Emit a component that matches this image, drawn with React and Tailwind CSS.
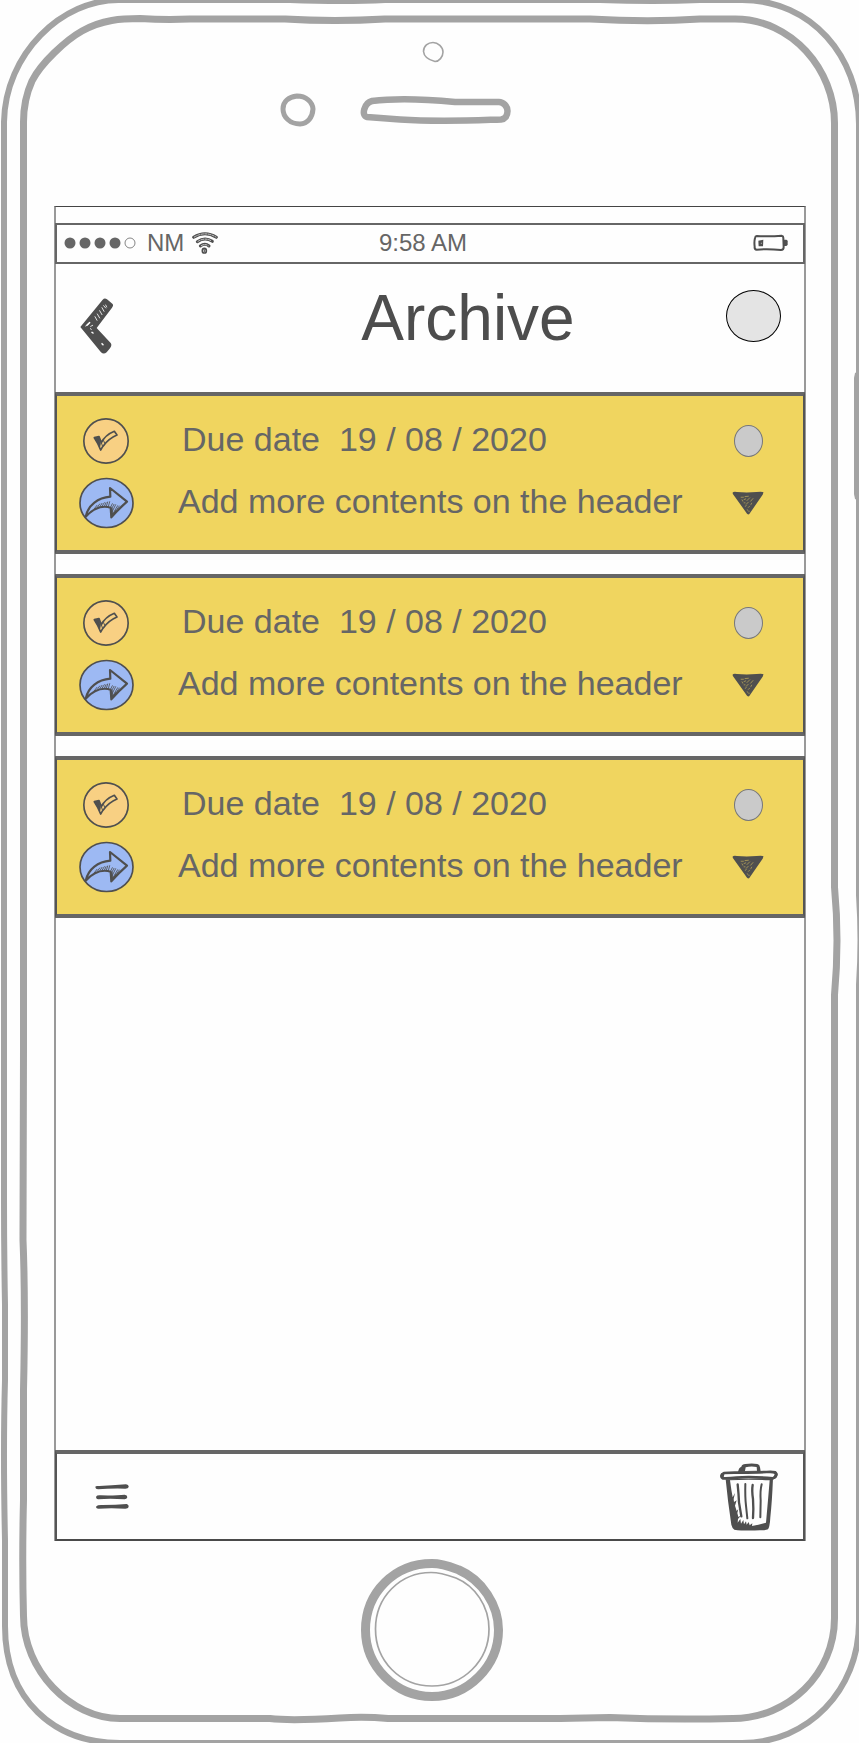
import React from "react";

const INK = "#4f4f4f";
const BEZEL = "#a3a3a3";

const tasks = [
  { id: 1, due: "19 / 08 / 2020", title: "Add more contents on the header" },
  { id: 2, due: "19 / 08 / 2020", title: "Add more contents on the header" },
  { id: 3, due: "19 / 08 / 2020", title: "Add more contents on the header" },
];

function PhoneFrame() {
  return (
    <svg
      aria-hidden="true"
      viewBox="0 0 859 1743"
      preserveAspectRatio="none"
      fill="none"
      stroke={BEZEL}
      className="pointer-events-none absolute inset-0 h-full w-full"
    >
      {/* outer edge */}
      <path
        strokeWidth="6"
        d="M120 0 H290 Q345 2 385 0 H600 Q655 2 700 0 H742 C812 0 859 57 859 124 V895 Q862 940 859 985 V1622 C859 1690 808 1743 742 1743 H120 C54 1743 5 1700 5 1626 V1540 Q3 1450 5 1380 V1305 Q4 1250 4 1200 V122 C5 54 62 -1 120 0 Z"
      />
      {/* inner edge */}
      <path
        strokeWidth="7"
        d="M140 18.500 Q165 20 190 19 H285 Q335 22 385 19 H590 Q650 22.500 700 19 H735 C792 19 834.500 70 834.500 123 V887 Q839.500 940 834.500 995 V1618 C834.500 1674 788 1718.500 733 1718.500 Q670 1720 610 1717.500 Q580 1718 560 1718.500 H388 Q365 1716.500 340 1718 Q290 1721 270 1718.500 H120 C70 1718.500 23.500 1670 23.500 1616 Q22 1560 23.500 1500 V1390 Q25.500 1300 23 1240 L23.500 1050 V122 C23.500 104 27 92 32 81 C41 63 66 40 82 31 C102 19.500 122 18.500 140 18.500 Z"
      />
      {/* camera, sensor, speaker */}
      <path
        strokeWidth="1.600"
        d="M433 42.500 C438 42.500 443 47 443 52 C443 57 439 61.500 435 61.500 C429 60 424 57 423.500 51.500 C423.500 46 428 42.500 433 42.500 Z"
      />
      <path
        strokeWidth="5"
        d="M297 96 C306 96 312.500 102 313 109 C312.500 117 308 123.500 300 124 C290 124 283 117 283 109 C283 101 289 97 297 96 Z"
      />
      <path
        strokeWidth="6.500"
        d="M372 101 C395 98 425 99 455 102 H499 C503 102 507.500 106 507.500 111 C507.500 116 505 119 501 119.500 C470 120.500 440 122 400 119.500 L367 117 C361 116 364 103 372 101 Z"
      />
      {/* side button */}
      <path fill={BEZEL} stroke="none" d="M859 371 L855 373 L854 378 V494 L855 499 L859 501 Z" />
    </svg>
  );
}

function SignalDots() {
  return (
    <svg width="72" height="12" viewBox="0 0 72 12" role="img" aria-label="Signal strength">
      {[6, 21, 36, 51].map((cx) => (
        <circle key={cx} cx={cx} cy="6" r="5.500" fill="#666" />
      ))}
      <circle cx="66" cy="6" r="5" fill="none" stroke="#666" strokeWidth="0.800" />
    </svg>
  );
}

function WifiIcon() {
  return (
    <svg width="26" height="24" viewBox="456 91 78 72" role="img" aria-label="Wi-Fi">
      <g fill="none" strokeLinecap="round">
        <g stroke={INK} strokeWidth="9">
          <path d="M461 110 Q495 89 529 110" />
          <path d="M472 123 Q495 108 517 122" />
          <path d="M481 136 Q495 126 507 136" />
        </g>
        <g stroke="#fefefe" strokeWidth="2" strokeDasharray="7 4">
          <path d="M463 109 Q495 90 528 109" />
          <path d="M474 122 Q495 109 515 121" />
          <path d="M484 135 Q495 128 505 135" />
        </g>
        <ellipse cx="493" cy="150" rx="6" ry="7" stroke={INK} strokeWidth="5" />
        <path d="M493 147 V153" stroke={INK} strokeWidth="3" />
      </g>
    </svg>
  );
}

function BatteryIcon() {
  return (
    <svg width="35" height="18" viewBox="969 100 105 54" role="img" aria-label="Battery low">
      <path
        fill="none"
        stroke={INK}
        strokeWidth="6"
        strokeLinejoin="round"
        d="M980 106 Q1020 108 1055 105 Q1061 106 1060 114 L1061 140 Q1061 148 1053 148 Q1015 144 980 147 Q973 146 974 138 Q972 124 975 112 Q976 106 980 106 Z"
      />
      <path fill={INK} d="M1060 117 H1069 Q1073 118 1073 122 V131 Q1073 135 1069 136 H1060 Z" />
      <path fill={INK} d="M985 120 L1000 117 L999 137 L986 137 Z" />
      <path stroke="#fefefe" strokeWidth="1.500" d="M994 130 V126" />
    </svg>
  );
}

function BackIcon() {
  return (
    <svg width="34" height="56" viewBox="119 294 102 168" aria-hidden="true">
      <path
        fill={INK}
        d="M120 381 L187 299 Q193 293 200 298 L216 311 Q221 316 215 323 L169 384 L211 429 Q216 436 209 445 L199 457 Q190 464 182 457 Z"
      />
      <g stroke="#fefefe" strokeLinecap="round" fill="none">
        <path strokeWidth="4.500" d="M140 375 L148 368 M155 397 L158 399 M185 431 L188 434" />
        <path
          strokeWidth="2.500"
          d="M136 378 L144 374 M151 379 L157 376 M164 350 L170 361 M171 342 L178 354 M178 332 L185 344 M185 323 L191 334 M190 317 L196 324 M196 315 L199 321 M150 386 L153 388"
        />
      </g>
    </svg>
  );
}

function CheckIcon() {
  return (
    <svg width="46" height="46" viewBox="99 97 138 138" aria-hidden="true">
      <circle cx="168" cy="166" r="66.500" fill="#f8d083" stroke={INK} strokeWidth="5" />
      <g fill="none" stroke={INK} strokeWidth="5" strokeLinejoin="round" strokeLinecap="round">
        <path d="M133 156 L147 153 L154 171 Q166 148 193 137 L201 148 Q176 158 158 183 L152 193 Q144 172 133 156 Z" />
        <path fill={INK} strokeWidth="3" d="M134 157 L146 154 L151 173 L149 184 Q143 170 134 157 Z" />
        <path strokeWidth="3" d="M154 171 L157 180 M161 165 L164 173" />
      </g>
    </svg>
  );
}

function ShareIcon() {
  return (
    <svg width="55" height="52" viewBox="87 275 165 156" aria-hidden="true">
      <ellipse cx="169.500" cy="353" rx="79.500" ry="73.500" fill="#9db9f3" stroke={INK} strokeWidth="5" />
      <g fill="none" stroke={INK} strokeLinejoin="round" strokeLinecap="round">
        <path
          strokeWidth="6.500"
          d="M107 394 C115 358 144 337 181 334 L180 308 L231 349 Q205 372 184 396 L182 367 C155 359 132 367 107 394 Z"
        />
        <path
          strokeWidth="2.500"
          d="M133 370 L141 360 M142 366 L149 356 M149 365 L156 354 M156 363 L163 352 M163 363 L168 352 M169 363 L173 350 M175 364 L179 349 M182 365 L187 355 M184 372 L192 357 M186 380 L197 358 M187 388 L203 361 M193 383 L208 362"
        />
        <path strokeWidth="4" d="M186 370 L187 390 L198 376" />
      </g>
    </svg>
  );
}

function TriangleIcon() {
  return (
    <svg width="32" height="24" viewBox="576 450 96 73" aria-hidden="true">
      <path
        fill={INK}
        d="M577 455 Q580 451 590 453 Q620 456 650 453 Q668 451 671 454 L669 461 L628 520 Q625 523 621 519 L578 459 Z"
      />
      <g fill="none" stroke="#f0d55f" strokeWidth="1.500" strokeLinecap="round">
        <path d="M603 469 H610 M615 467 L625 466 M606 477 L608 481 M612 476 L617 474 M621 479 L629 471 M612 486 H615 M619 490 L625 484 M632 481 L639 473 M616 497 L619 493 M625 500 L629 496 M633 491 L635 487 M622 507 L623 509 M627 511 V513" />
      </g>
    </svg>
  );
}

function MenuIcon() {
  return (
    <svg width="34" height="26" viewBox="167 161 102 78" aria-hidden="true">
      <g fill={INK}>
        <path d="M169 168 Q171 166 180 167 Q215 165 260 162 Q269 164 268 170 Q267 175 258 175 Q210 174 176 177 Q166 177 169 168 Z" />
        <path d="M171 198 Q173 194 184 195 Q230 196 256 193 Q264 194 264 201 Q262 207 256 207 Q210 204 177 207 Q168 206 171 198 Z" />
        <path d="M171 228 Q175 223 190 224 Q230 224 262 221 Q269 223 268 230 Q266 235 258 235 Q215 232 178 235 Q168 235 171 228 Z" />
      </g>
    </svg>
  );
}

function TrashIcon() {
  return (
    <svg width="58" height="68" viewBox="360 97 174 204" aria-hidden="true">
      <g fill="none" stroke={INK} strokeLinejoin="round" strokeLinecap="round">
        {/* handle */}
        <path
          fill={INK}
          stroke="none"
          fillRule="evenodd"
          d="M414 124 Q416 111 424 108 Q426 100 436 100 Q456 97 472 100 Q479 101 480 110 L482 122 Z M435 121 L437 110 Q452 106 470 109 L471 120 Z"
        />
        {/* lid */}
        <path
          strokeWidth="8"
          d="M372 127 Q395 125 420 126 Q470 125 500 124 Q518 123 526 125 Q532 131 526 139 L518 143 Q450 137 410 141 Q385 144 368 143 Q362 138 366 131 Z"
        />
        <path fill={INK} stroke="none" d="M364 129 Q370 124 379 124 L373 131 L370 145 Q359 142 362 133 Z M516 123 Q529 118 533 130 Q532 142 517 147 L524 131 Z" />
        {/* bin */}
        <path
          fill={INK}
          stroke="none"
          fillRule="evenodd"
          d="M377 146 L519 143 Q516 215 511 260 Q510 285 505 294 Q500 299 480 299 Q430 301 403 297 Q397 294 394 282 Q383 210 377 146 Z M390 149 Q394 180 398 200 L405 187 L401 205 L402 214 L410 209 L405 225 L410 241 L415 235 L412 247 L415 259 L424 254 L414 265 L413 276 L421 265 L423 279 L430 268 L432 281 L438 272 L440 282 L446 274 L449 284 L457 278 L456 286 Q480 282 498 276 Q504 210 509 149 Q440 145 390 149 Z"
        />
        {/* ribs */}
        <g strokeWidth="7">
          <path d="M413 161 Q416 190 417 215 L424 257" />
          <path strokeWidth="6" d="M436 160 Q435 200 438 225 L442 263" />
          <path d="M458 163 Q455 180 459 205 Q461 235 459 262" />
          <path strokeWidth="6" d="M485 161 Q480 180 482 210 L481 260" />
        </g>
      </g>
    </svg>
  );
}

function HomeButton() {
  return (
    <button type="button" aria-label="Home" className="size-[142px] cursor-pointer rounded-full">
      <svg width="142" height="142" viewBox="0 0 142 142" fill="none" stroke={BEZEL}>
        <path
          strokeWidth="9"
          d="M71 4.500 C82 4.500 90 8 98 11 C121 21 137.500 46 137.500 71 C137.500 107 107 137.500 71 137.500 C34 137.500 4.500 107 4.500 71 C4.500 33 34 4.500 71 4.500 Z"
        />
        <path
          strokeWidth="1.700"
          d="M70 13.500 C80 13.500 88 16.500 95 19 C114 27 128 47 128 70 C128 102 102 127 71 127 C39 127 14.500 102 14.500 70 C14.500 38 39 13.500 70 13.500 Z"
        />
      </svg>
    </button>
  );
}

function StatusBar() {
  return (
    <div className="-mx-px mt-4 grid h-[41px] grid-cols-[315px_1fr_auto] items-center border-2 border-[#666] pr-[15px] pb-0.5 pl-[7px] text-2xl leading-6 text-[#666]">
      <div className="flex items-center">
        <SignalDots />
        <span className="ml-[11px]">NM</span>
        <span className="ml-2">
          <WifiIcon />
        </span>
      </div>
      <time>9:58 AM</time>
      <BatteryIcon />
    </div>
  );
}

function Header() {
  return (
    <header className="flex h-32 items-start pt-[22px] pr-[23px] pl-6">
      <button type="button" aria-label="Back" className="mt-3 cursor-pointer">
        <BackIcon />
      </button>
      <h1 className="flex-1 pl-24 text-center text-[64px] leading-[64px] text-[#4d4d4d]">
        Archive
      </h1>
      <button
        type="button"
        aria-label="Profile"
        className="mt-1 h-[52px] w-[55px] cursor-pointer rounded-[50%] border border-black bg-[#e4e4e4]"
      />
    </header>
  );
}

function TaskCard({ task }) {
  return (
    <li className="grid h-[162px] grid-cols-[98px_1fr_110px] border-x-2 border-y-4 border-x-[#555] border-y-[#666] bg-[#f0d55f] pt-[14px] text-[34px] leading-10 text-[#666]">
      <div className="grid auto-rows-[62px] place-items-center">
        <button type="button" aria-label="Mark as done" className="cursor-pointer">
          <CheckIcon />
        </button>
        <button type="button" aria-label="Share" className="cursor-pointer">
          <ShareIcon />
        </button>
      </div>
      <div className="grid auto-rows-[62px] items-center pl-[23px] whitespace-nowrap">
        <p className="pb-1 pl-1 whitespace-pre">{"Due date  " + task.due}</p>
        <h2 className="pb-1">{task.title}</h2>
      </div>
      <div className="grid auto-rows-[62px] place-items-center">
        <span className="h-8 w-[29px] rounded-[50%] border border-[#777] bg-[#cacaca]" />
        <button type="button" aria-label="Expand" className="cursor-pointer">
          <TriangleIcon />
        </button>
      </div>
    </li>
  );
}

export default function App() {
  return (
    <div className="relative flex min-h-screen flex-col overflow-hidden bg-[#fefefe] font-['Liberation_Sans',Arial,sans-serif]">
      <PhoneFrame />
      <div className="relative mt-[206px] mr-[53px] ml-[54px] flex flex-1 flex-col border-x-2 border-t border-x-[#999] border-t-[#444]">
        <StatusBar />
        <Header />
        <main className="-mx-px flex-1 pb-5">
          <ul className="flex flex-col gap-5">
            {tasks.map((task) => (
              <TaskCard key={task.id} task={task} />
            ))}
          </ul>
        </main>
        <nav className="-mx-px flex h-[91px] items-center justify-between border-x-2 border-t-4 border-b-2 border-x-[#555] border-t-[#666] border-b-[#4a4a4a] pr-[25px] pl-[38px]">
          <button type="button" aria-label="Menu" className="cursor-pointer">
            <MenuIcon />
          </button>
          <button type="button" aria-label="Delete" className="cursor-pointer">
            <TrashIcon />
          </button>
        </nav>
      </div>
      <div className="relative flex h-[202px] items-start justify-center pt-[18px] pl-1">
        <HomeButton />
      </div>
    </div>
  );
}
